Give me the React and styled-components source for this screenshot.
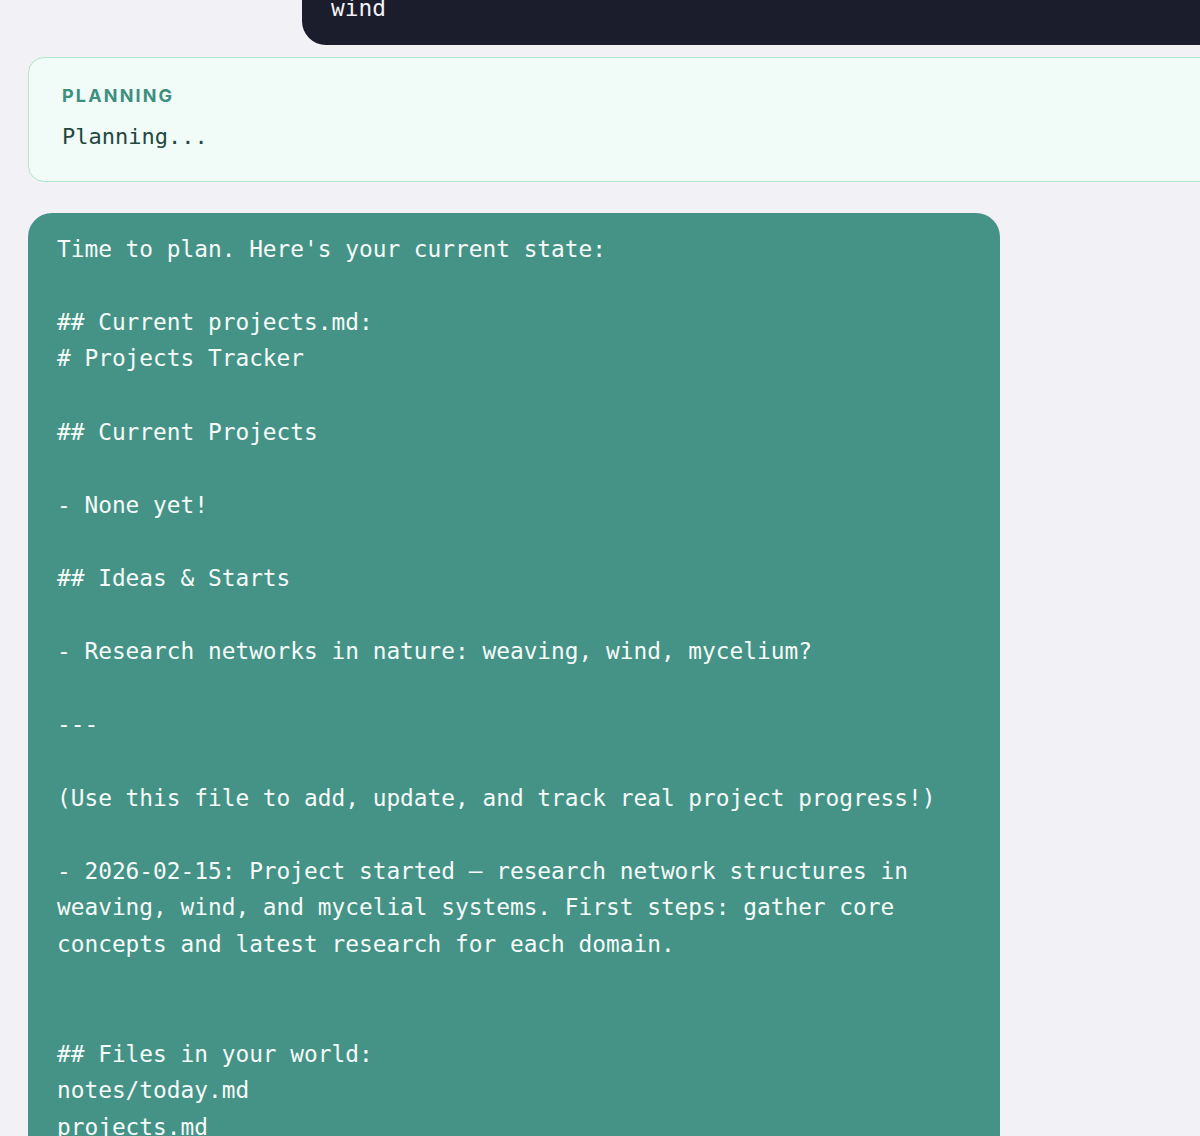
import React from "react";
import styled, {createGlobalStyle} from "styled-components";

const GlobalStyle = createGlobalStyle`
html, body {
    margin: 0;
    padding: 0;
    background: #f2f1f6;
    overflow: hidden;
}
`;

const Feed = styled.div`
width: 1300px;
margin-top: -28px;
padding-left: 28px;
display: flex;
flex-direction: column;
box-sizing: border-box;
`;

const mono = `"DejaVu Sans Mono", "Liberation Mono", monospace`;

const UserBubble = styled.div`
margin-left: 274px;
background: #1b1c2c;
color: #f3f3f6;
border-radius: 24px;
padding: 18px 29px;
font-family: ${mono};
font-size: 22.8px;
line-height: 36.6px;
white-space: pre-wrap;
`;

const StatusCard = styled.div`
margin-top: 12px;
background: #f1fbf7;
border: 1px solid #ade6c8;
border-radius: 16px;
padding: 26px 33px 27px;
`;

const StatusLabel = styled.div`
font-family: Inter, "Noto Sans", sans-serif;
font-weight: 700;
font-size: 18px;
line-height: 24px;
letter-spacing: 0.12em;
color: #3d8f80;
text-transform: uppercase;
`;

const StatusText = styled.div`
margin-top: 11px;
font-family: ${mono};
font-size: 22px;
line-height: 35px;
color: #1f4842;
`;

const PromptBubble = styled.div`
margin-top: 31px;
width: 972px;
box-sizing: border-box;
background: #449386;
color: #f6fbfa;
border-radius: 24px;
padding: 18px 29px;
font-family: ${mono};
font-size: 22.8px;
line-height: 36.6px;
white-space: pre-wrap;
`;

const prompt = `Time to plan. Here's your current state:

## Current projects.md:
# Projects Tracker

## Current Projects

- None yet!

## Ideas & Starts

- Research networks in nature: weaving, wind, mycelium?

---

(Use this file to add, update, and track real project progress!)

- 2026-02-15: Project started — research network structures in weaving, wind, and mycelial systems. First steps: gather core concepts and latest research for each domain.


## Files in your world:
notes/today.md
projects.md
`;

const App = () => {
    return (
        <>
            <GlobalStyle />
            <Feed>
                <UserBubble>wind</UserBubble>
                <StatusCard>
                    <StatusLabel>Planning</StatusLabel>
                    <StatusText>Planning...</StatusText>
                </StatusCard>
                <PromptBubble>{prompt}</PromptBubble>
            </Feed>
        </>
    );
};

export default App;
